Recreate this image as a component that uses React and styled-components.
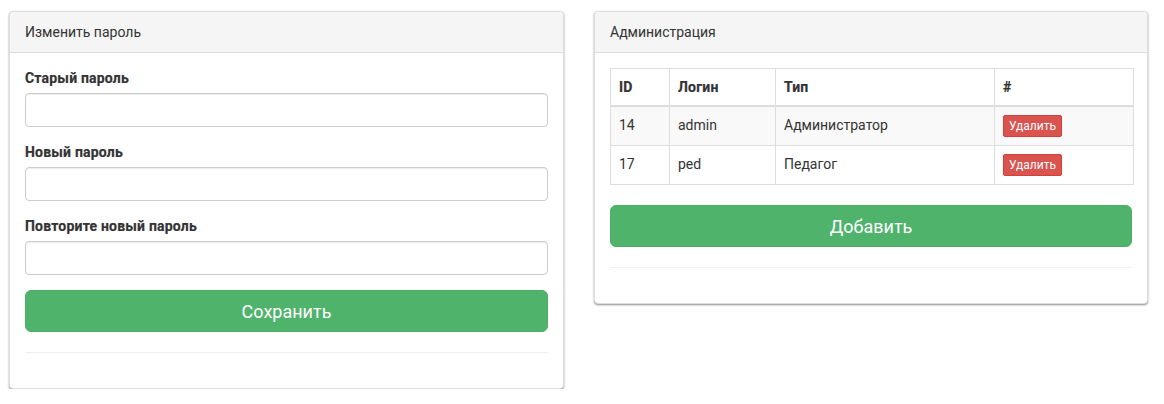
import React from 'react';
import styled, { createGlobalStyle } from 'styled-components';

const GlobalStyle = createGlobalStyle`
  * { box-sizing: border-box; }
  body {
    margin: 0;
    background: #fff;
    font-family: Roboto, "Liberation Sans", sans-serif;
    font-size: 14px;
    line-height: 20px;
    color: #333;
  }
`;

const Page = styled.div`
  display: grid;
  grid-template-columns: 555px 554px;
  column-gap: 30px;
  align-items: start;
  padding: 11px 0 0 9px;
`;

const Panel = styled.div`
  background: #fff;
  border: 1px solid #ddd;
  border-radius: 4px;
  box-shadow: 0 1px 2px rgba(0, 0, 0, 0.45);
`;

const PanelHeading = styled.div`
  padding: 10px 15px;
  background: #f5f5f5;
  border-bottom: 1px solid #ddd;
  border-radius: 3px 3px 0 0;
`;

const PanelBody = styled.div`
  padding: 15px;
`;

const FormGroup = styled.div`
  margin-bottom: 15px;
`;

const Label = styled.label`
  display: block;
  font-weight: 700;
  letter-spacing: 0.2px;
  -webkit-text-stroke: 0.2px #333;
  margin-bottom: 5px;
`;

const Input = styled.input`
  display: block;
  width: 100%;
  height: 34px;
  padding: 6px 12px;
  border: 1px solid #ccc;
  border-radius: 4px;
  box-shadow: inset 0 1px 1px rgba(0, 0, 0, 0.075);
  font: inherit;
`;

const BigButton = styled.button`
  display: block;
  width: 100%;
  height: 42px;
  border: 1px solid #4cae66;
  border-radius: 6px;
  background: #4fb36c;
  color: #fff;
  font-family: Roboto, "Liberation Sans", sans-serif;
  font-size: 18px;
  cursor: pointer;
`;

const Rule = styled.hr`
  margin: 20px 0;
  border: 0;
  border-top: 1px solid #eee;
`;

const Table = styled.table`
  width: 100%;
  border-collapse: collapse;
  margin-bottom: 20px;
  table-layout: fixed;
`;

const Th = styled.th`
  width: ${(p) => p.$w}px;
  padding: 8px;
  text-align: left;
  font-weight: 700;
  letter-spacing: 0.2px;
  -webkit-text-stroke: 0.2px #333;
  border: 1px solid #ddd;
  border-bottom-width: 2px;
`;

const Row = styled.tr`
  background: ${(p) => (p.$striped ? '#f9f9f9' : '#fff')};
`;

const Td = styled.td`
  padding: 8px;
  border: 1px solid #ddd;
  vertical-align: top;
`;

const DeleteButton = styled.button`
  padding: 1px 5px;
  font-family: Roboto, "Liberation Sans", sans-serif;
  font-size: 12px;
  line-height: 18px;
  color: #fff;
  background: #d9534f;
  border: 1px solid #d43f3a;
  border-radius: 2px;
  cursor: pointer;
`;

const users = [
  { id: 14, login: 'admin', type: 'Администратор' },
  { id: 17, login: 'ped', type: 'Педагог' },
];

const fields = ['Старый пароль', 'Новый пароль', 'Повторите новый пароль'];

export default function App() {
  return (
    <>
      <GlobalStyle />
      <Page>
        <Panel>
          <PanelHeading>Изменить пароль</PanelHeading>
          <PanelBody>
            {fields.map((f) => (
              <FormGroup key={f}>
                <Label>{f}</Label>
                <Input type="password" />
              </FormGroup>
            ))}
            <BigButton>Сохранить</BigButton>
            <Rule />
          </PanelBody>
        </Panel>

        <Panel>
          <PanelHeading>Администрация</PanelHeading>
          <PanelBody>
            <Table>
              <thead>
                <tr>
                  <Th $w={59}>ID</Th>
                  <Th $w={106}>Логин</Th>
                  <Th $w={219}>Тип</Th>
                  <Th $w={139}>#</Th>
                </tr>
              </thead>
              <tbody>
                {users.map((u, i) => (
                  <Row key={u.id} $striped={i % 2 === 0}>
                    <Td>{u.id}</Td>
                    <Td>{u.login}</Td>
                    <Td>{u.type}</Td>
                    <Td>
                      <DeleteButton>Удалить</DeleteButton>
                    </Td>
                  </Row>
                ))}
              </tbody>
            </Table>
            <BigButton>Добавить</BigButton>
            <Rule />
          </PanelBody>
        </Panel>
      </Page>
    </>
  );
}
